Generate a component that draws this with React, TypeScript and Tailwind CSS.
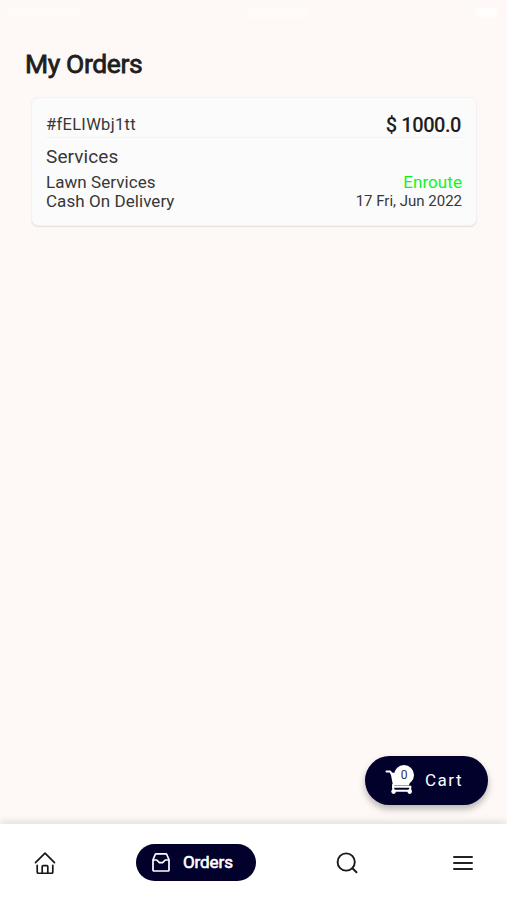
import type { ReactNode } from "react";

interface Order {
  id: string;
  price: string;
  service: string;
  payment: string;
  status: string;
  date: string;
}

const orders: Order[] = [
  {
    id: "#fELIWbj1tt",
    price: "$ 1000.0",
    service: "Lawn Services",
    payment: "Cash On Delivery",
    status: "Enroute",
    date: "17 Fri, Jun 2022",
  },
];

function HomeIcon() {
  return (
    <svg width="22" height="22" viewBox="0 0 22 22" fill="none" stroke="#18181b" strokeWidth="1.7" strokeLinecap="round" strokeLinejoin="round">
      <path d="M1.5 10.6 11 1.2l9.500 9.400" />
      <path d="M3.200 13.300v6.700q0 1.300 1.300 1.300h13q1.300 0 1.300-1.300v-6.700" />
      <path d="M8.200 21v-6.400q0-.9.9-.9h3.800q.9 0 .9.900V21" />
    </svg>
  );
}

function InboxIcon() {
  return (
    <svg width="18" height="19" viewBox="0 0 18 19" fill="none" stroke="#fff" strokeWidth="1.7" strokeLinejoin="round">
      <path d="M1 6.800 3.100 1.700q.4-.8 1.300-.8h9.200q.9 0 1.300.8L17 6.800v10.200q0 1-1 1H2q-1 0-1-1V6.800Z" />
      <path d="M1 7h3.800l2.600 2.600h3.200L13.200 7H17" />
    </svg>
  );
}

function SearchIcon() {
  return (
    <svg width="22" height="22" viewBox="0 0 22 22" fill="none" stroke="#18181b" strokeWidth="1.9" strokeLinecap="round">
      <circle cx="10.200" cy="10" r="8.600" />
      <path d="m16.400 16.300 4.100 4" />
    </svg>
  );
}

function MenuIcon() {
  return (
    <svg width="22" height="18" viewBox="0 0 22 18" fill="none" stroke="#222225" strokeWidth="2" strokeLinecap="round">
      <path d="M2 3h18M2 9h18M2 15h18" />
    </svg>
  );
}

function CartIcon() {
  return (
    <svg width="30" height="30" viewBox="0 0 30 30" fill="none" stroke="#fff" strokeWidth="2">
      <path d="M1.500 5.500h3.700l2 3.500" strokeLinecap="round" strokeLinejoin="round" />
      <path d="M5.500 6.500 12 7l13 9-1 3.500H8Z" fill="#fff" stroke="none" />
      <path d="M7 20.800h19.200M7 24.800h19" />
      <path d="M8.200 18v7M25.200 20v5" />
      <circle cx="8.600" cy="25.600" r="2.300" fill="#fff" stroke="none" />
      <circle cx="24.700" cy="25.600" r="2.300" fill="#fff" stroke="none" />
    </svg>
  );
}

function OrderCard({ order }: { order: Order }) {
  return (
    <article className="mr-[30px] ml-[31px] h-[129px] rounded-[7px] border border-[#f3f2f1] bg-[#fbfbfb] px-[14px] pt-[13px] text-[#373737] shadow-[0_1px_1px_rgba(0,0,0,0.10)]">
      <div className="flex h-[27px] items-center justify-between border-b border-[#f2f2f1] pt-[2px] pr-px">
        <span className="text-[16.5px] tracking-[0.3px]">{order.id}</span>
        <span className="text-[20px] font-medium tracking-[-0.45px] text-[#1e1e1e]">{order.price}</span>
      </div>
      <h2 className="mt-[7px] text-[19px] leading-6 tracking-[0.1px]">Services</h2>
      <div className="mt-1 flex h-[19px] items-center justify-between text-[17px] tracking-[0.06px]">
        <span>{order.service}</span>
        <span className="text-[#12f51c]">{order.status}</span>
      </div>
      <div className="flex h-5 items-center justify-between">
        <span className="text-[17px] tracking-[0.06px]">{order.payment}</span>
        <span className="relative -top-px text-[15px]">{order.date}</span>
      </div>
    </article>
  );
}

function NavButton({ label, children }: { label: string; children: ReactNode }) {
  return (
    <button type="button" aria-label={label} className="flex h-[38px] w-[22px] items-center justify-center">
      {children}
    </button>
  );
}

export default function App() {
  return (
    <div className="relative flex h-[900px] w-[507px] flex-col overflow-hidden bg-[#fef9f6] font-['Roboto','Liberation_Sans',sans-serif]">
      <header className="h-[97px] shrink-0">
        <div className="flex h-[47px] justify-between pt-[8px] pr-[10px] pl-[6px]">
          <span className="h-[9px] w-[75px] rounded-full bg-[#fffbf7] blur-[2px]" />
          <span className="h-[9px] w-[62px] rounded-full bg-[#fffcf8] blur-[2px]" />
          <span className="h-[9px] w-[22px] rounded-full bg-[#fffefc] blur-[1px]" />
        </div>
        <h1 className="ml-[25px] text-[26.5px] leading-[34px] tracking-[-0.4px] text-[#1e1e1e] [-webkit-text-stroke:0.8px_#1e1e1e]">
          My Orders
        </h1>
      </header>

      <main className="flex-1">
        {orders.map((order) => (
          <OrderCard key={order.id} order={order} />
        ))}
      </main>

      <button
        type="button"
        className="absolute top-[756px] left-[365px] flex h-[49px] w-[123px] items-center rounded-full bg-[#02012c] pl-5 text-white shadow-[0_4px_7px_rgba(0,0,0,0.28)]"
      >
        <span className="relative h-[30px] w-[30px]">
          <CartIcon />
          <span className="absolute -top-px left-[9px] flex h-5 w-5 items-center justify-center rounded-full bg-white text-[12px] text-[#303044]">
            0
          </span>
        </span>
        <span className="ml-[10px] text-[17px] tracking-[1.5px]">Cart</span>
      </button>

      <nav className="flex h-[76px] shrink-0 items-start bg-white pt-5 pl-[34px] shadow-[0_-2px_8px_rgba(0,0,0,0.12)]">
        <NavButton label="Home">
          <HomeIcon />
        </NavButton>
        <button type="button" className="mx-20 flex h-[37px] w-[120px] items-center rounded-full bg-[#02012c] pl-[16px] text-white">
          <InboxIcon />
          <span className="ml-[13px] text-[17px] tracking-[-0.1px] [-webkit-text-stroke:0.6px_white]">Orders</span>
        </button>
        <NavButton label="Search">
          <SearchIcon />
        </NavButton>
        <div className="ml-[94px]">
          <NavButton label="Menu">
            <MenuIcon />
          </NavButton>
        </div>
      </nav>
    </div>
  );
}
